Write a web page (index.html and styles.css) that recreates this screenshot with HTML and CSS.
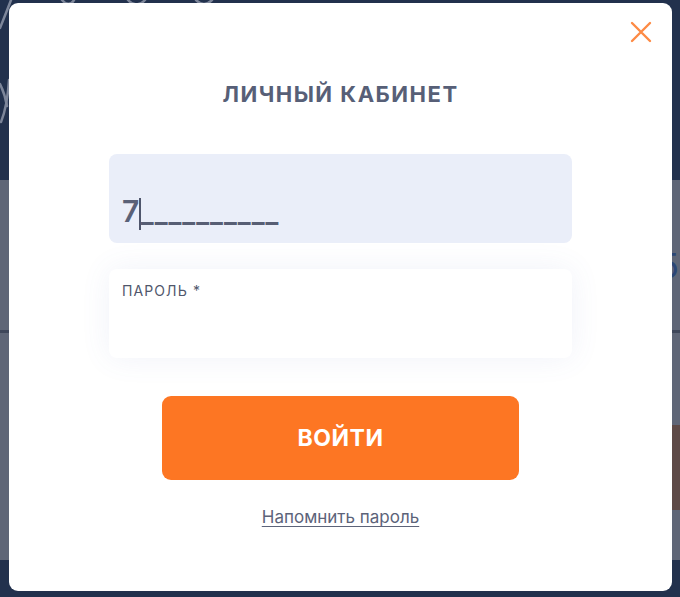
FILE: index.html
```html
<!DOCTYPE html>
<html lang="ru">
<head>
<meta charset="utf-8">
<title>Личный кабинет</title>
<link rel="stylesheet" href="styles.css">
</head>
<body>
<div class="page">
  <div class="band band-top">
    <svg class="scribble" width="260" height="180" viewBox="0 0 260 180" fill="none" stroke="#7d869a" stroke-width="2.5" stroke-linecap="round">
      <path d="M0 28 C 4 18, 8 8, 11 0"/>
      <path d="M0 84 C 4 92, 6 100, 7 106"/>
      <path d="M9 80 C 8 96, 5 112, 1 122"/>
      <path d="M62 0 C 66 5, 71 5, 74 0"/>
      <path d="M128 0 C 133 6, 140 6, 145 0"/>
      <path d="M196 0 C 201 5, 207 5, 212 0"/>
    </svg>
  </div>
  <div class="band band-gray">
    <div class="side-glyph">5</div>
  </div>
  <div class="divider"></div>
  <div class="band band-gray2">
    <div class="side-block"></div>
  </div>
  <div class="band band-bottom"></div>
</div>

<div class="modal">
  <button class="close" aria-label="Закрыть">
    <svg width="22" height="22" viewBox="0 0 22 22" stroke="#fd8a44" stroke-width="2.4" stroke-linecap="round">
      <path d="M2 2 L20 20 M20 2 L2 20"/>
    </svg>
  </button>
  <h1 class="title">ЛИЧНЫЙ КАБИНЕТ</h1>
  <form class="form">
    <div class="field field-phone">
      <div class="phone-value"><span class="digit">7</span><span class="caret"></span><span class="mask">__________</span></div>
    </div>
    <div class="field field-pass">
      <div class="label">ПАРОЛЬ *</div>
    </div>
    <button type="button" class="submit">ВОЙТИ</button>
    <a class="remind" href="#">Напомнить пароль</a>
  </form>
</div>
</body>
</html>
```

FILE: styles.css
```css
* { box-sizing: border-box; }
html, body { margin: 0; padding: 0; }
body {
  width: 680px;
  height: 597px;
  overflow: hidden;
  font-family: "Inter", "Noto Sans", sans-serif;
  position: relative;
}

.page { display: flex; flex-direction: column; height: 597px; }
.band-top { height: 180px; background: #22314d; position: relative; }
.scribble { display: block; }
.band-gray {
  height: 150px;
  background: #5f6677;
  display: flex;
  justify-content: flex-end;
  align-items: flex-start;
}
.side-glyph {
  margin-top: 66px;
  margin-right: 1px;
  font-size: 34px;
  line-height: 40px;
  color: #2c4676;
  font-family: "Inter", sans-serif;
}
.divider { height: 3px; background: #3f475a; }
.band-gray2 {
  height: 227px;
  background: #5f6677;
  display: flex;
  justify-content: flex-end;
  align-items: flex-start;
}
.side-block {
  margin-top: 92px;
  width: 12px;
  height: 85px;
  background: #5e4a47;
}
.band-bottom { flex: 1; background: #22314d; }

.modal {
  position: absolute;
  left: 9px;
  top: 3px;
  width: 663px;
  height: 588px;
  background: #ffffff;
  border-radius: 9px;
  padding: 75px 100px 0;
}
.close {
  position: absolute;
  top: 18px;
  right: 20px;
  width: 22px;
  height: 22px;
  padding: 0;
  border: 0;
  background: none;
}
.close svg { display: block; }

.title {
  margin: 0;
  text-align: center;
  font-size: 22px;
  line-height: 32px;
  font-weight: 700;
  color: #575f77;
  letter-spacing: 1.5px;
}

.form {
  margin-top: 44px;
  display: flex;
  flex-direction: column;
  align-items: center;
}
.field {
  width: 463px;
  height: 89px;
  border-radius: 8px;
  padding: 0 13px;
}
.field-phone {
  background: #eaeef9;
  display: flex;
  align-items: flex-end;
  padding-bottom: 12px;
}
.phone-value {
  display: flex;
  align-items: baseline;
  color: #5a6178;
  font-size: 30px;
  line-height: 36px;
}
.digit { font-weight: 600; }
.caret {
  align-self: flex-end;
  width: 1.5px;
  height: 32px;
  background: #4f566c;
  margin-bottom: 1px;
}
.mask {
  font-size: 27px;
  letter-spacing: 1px;
  color: #575e74;
  font-weight: 700;
}
.field-pass {
  margin-top: 26px;
  background: #ffffff;
  box-shadow: 0 0 30px rgba(90, 110, 190, 0.09);
  padding-top: 14px;
}
.label {
  font-size: 14px;
  line-height: 16px;
  letter-spacing: 1.1px;
  color: #50576c;
}
.submit {
  margin-top: 38px;
  width: 357px;
  height: 84px;
  border: 0;
  border-radius: 9px;
  background: #fd7623;
  color: #ffffff;
  font-family: "Inter", sans-serif;
  font-size: 23px;
  font-weight: 700;
  letter-spacing: 0.5px;
}
.remind {
  margin-top: 27px;
  font-size: 17px;
  line-height: 20px;
  color: #5c6379;
  text-decoration: underline;
  text-underline-offset: 3px;
}
```
